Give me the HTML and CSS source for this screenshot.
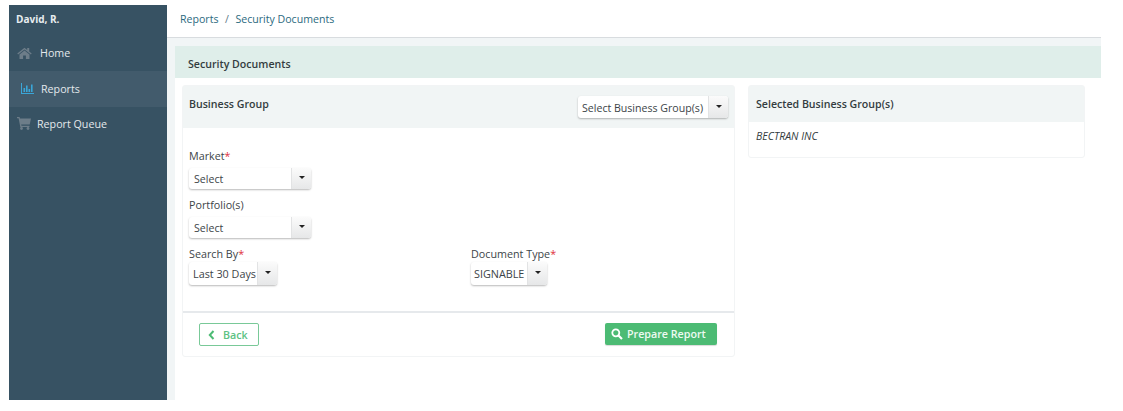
FILE: index.html
```html
<!DOCTYPE html>
<html lang="en">
<head>
<meta charset="utf-8">
<title>Security Documents</title>
<link rel="stylesheet" href="styles.css">
</head>
<body>
<div class="app">
  <aside class="sidebar">
    <div class="user">David, R.</div>
    <a class="nav nav-home"><svg class="ico" width="15" height="12" viewBox="0 0 15 12"><path fill="#6d7d89" d="M7.5 0.8 0.3 6.6l.8 1L7.5 2.5l6.4 5.1.8-1-2.5-2V1h-2v2zM2.5 7.5V12h3.6V8.600h2.800V12h3.600V7.500L7.500 3.500z"/></svg><span>Home</span></a>
    <a class="nav nav-reports"><svg class="ico" width="13" height="11" viewBox="0 0 13 11"><path fill="#3aa6d8" d="M0 0h1v10h12v1H0zM2.500 5h1.600v4H2.500zM5 2.500h1.600V9H5zM7.500 6h1.600v3H7.500zM10 1.500h1.600V9H10z"/></svg><span>Reports</span></a>
    <a class="nav nav-queue"><svg class="ico" width="14" height="13" viewBox="0 0 14 13"><path fill="#6d7d89" d="M0 0h2.500l.5 1.500h11L12.700 7.500H4.200l.3 1.300h8v1.200H3.300L1.600 1.200H0z"/><circle fill="#6d7d89" cx="4.500" cy="11.500" r="1.400"/><circle fill="#6d7d89" cx="11" cy="11.500" r="1.400"/></svg><span>Report Queue</span></a>
  </aside>
  <div class="main">
    <header class="crumbs"><a>Reports</a><span class="sep">/</span><a>Security Documents</a></header>
    <div class="content">
      <h1 class="page-title">Security Documents</h1>
      <div class="columns">
        <section class="card form-card">
          <div class="card-head group-head">
            <h2>Business Group</h2>
            <div class="select select-group"><span class="val">Select Business Group(s)</span><span class="caret-box"><i class="caret"></i></span></div>
          </div>
          <div class="form-body">
            <label class="lbl lbl-market">Market<b>*</b></label>
            <div class="select select-wide"><span class="val">Select</span><span class="caret-box"><i class="caret"></i></span></div>
            <label class="lbl lbl-portfolio">Portfolio(s)</label>
            <div class="select select-wide"><span class="val">Select</span><span class="caret-box"><i class="caret"></i></span></div>
            <div class="split">
              <div class="field">
                <label class="lbl">Search By<b>*</b></label>
                <div class="select select-small select-days"><span class="val">Last 30 Days</span><span class="caret-box"><i class="caret"></i></span></div>
              </div>
              <div class="field">
                <label class="lbl">Document Type<b>*</b></label>
                <div class="select select-small select-doc"><span class="val">SIGNABLE</span><span class="caret-box"><i class="caret"></i></span></div>
              </div>
            </div>
          </div>
          <div class="actions">
            <button class="btn btn-back"><svg width="7" height="10" viewBox="0 0 7 10"><path fill="none" stroke="#4cbb74" stroke-width="2" d="M5.500 1 1.800 5l3.700 4"/></svg>Back</button>
            <button class="btn btn-prepare"><svg width="12" height="12" viewBox="0 0 12 12"><circle cx="4.800" cy="4.800" r="3.500" fill="none" stroke="#fff" stroke-width="1.800"/><path stroke="#fff" stroke-width="2.200" d="M7.500 7.500 11 11"/></svg>Prepare Report</button>
          </div>
        </section>
        <section class="card side-card">
          <div class="card-head side-head"><h2>Selected Business Group(s)</h2></div>
          <div class="side-body"><em>BECTRAN INC</em></div>
        </section>
      </div>
    </div>
  </div>
</div>
</body>
</html>
```

FILE: styles.css
```css
* { box-sizing: border-box; }
html, body { margin: 0; height: 100%; }
body {
  background: #fff;
  font-family: "Open Sans", sans-serif;
  font-size: 11px;
  color: #3c4448;
  padding: 5px 22px 11px 9px;
}
.app { display: flex; height: 395px; }
.sidebar { width: 158px; flex: none; background: #375263; color: #e4e9ec; }
.user { height: 30px; padding: 6px 0 0 7px; font-weight: 700; font-size: 10px; line-height: 16px; color: #e8edf0; }
.nav { display: flex; align-items: center; height: 36px; font-size: 10.700px; }
.nav-home { padding: 0 0 1px 8px; gap: 8px; }
.nav-reports { padding: 0 0 1px 12px; gap: 7px; background: #425b6c; }
.nav-queue { padding: 0 0 1px 8px; gap: 6px; height: 34px; }
.main { flex: 1; display: flex; flex-direction: column; min-width: 0; }
.crumbs { height: 33px; padding: 0 0 5px 13px; display: flex; align-items: center; border-bottom: 1px solid #d8dcdf; color: #2c6a80; font-size: 10.600px; }
.sep { margin: 0 6.500px; color: #5f7a88; }
.content { flex: 1; background: #fff; border-left: 8px solid #f1f5f6; border-top: 8px solid #f1f5f6; }
.page-title { margin: 0; height: 32px; background: #dfeeea; font-size: 10.600px; font-weight: 600; line-height: 37px; padding-left: 13px; color: #333c40; }
.columns { display: flex; align-items: flex-start; padding: 7px 0 0 7px; gap: 13px; }
.card { background: #fff; border: 1px solid #f2f4f5; border-radius: 3px; }
.card h2 { margin: 0; font-size: 10.600px; font-weight: 600; color: #333c40; }
.card-head { background: #f1f5f5; }
.form-card { width: 553px; height: 272px; display: flex; flex-direction: column; }
.group-head { height: 42px; display: flex; justify-content: space-between; padding: 10px 6px 0 6px; }
.group-head h2 { line-height: 16px; }
.form-body { flex: 1; padding: 20px 6px 0 6px; }
.lbl { display: block; font-size: 10.750px; line-height: 16px; color: #3c4448; }
.lbl b { color: #e0313c; font-weight: 400; }
.lbl-market { margin-bottom: 4px; }
.lbl-portfolio { margin: 8px 0 4px; }
.select { display: flex; background: #fff; border-radius: 3px; box-shadow: 0 1px 2px rgba(0,0,0,.28); font-size: 10.600px; color: #3c4448; }
.val { flex: 1; white-space: nowrap; overflow: hidden; line-height: 22px; }
.caret-box { flex: none; width: 20px; display: flex; align-items: center; justify-content: center; padding-bottom: 2px; background: linear-gradient(#fbfbfb, #e6e7e8); border-left: 1px solid #e2e3e4; border-radius: 0 3px 3px 0; }
.caret { width: 0; height: 0; border: 3.500px solid transparent; border-top: 3.500px solid #222; border-bottom: 0; }
.select-group { width: 150px; height: 22px; flex: none; }
.select-group .val { padding-left: 4px; line-height: 24px; }
.select-wide { width: 122px; height: 21px; }
.select-wide .val { padding-left: 5px; line-height: 23px; }
.split { display: flex; margin-top: 8px; }
.field { width: 282px; flex: none; }
.select-small { height: 23px; font-size: 10.800px; }
.select-small .val { padding-left: 3px; line-height: 23px; }
.select-days .val { padding-left: 4px; }
.select-days { width: 88px; }
.select-doc { width: 76px; }
.actions { height: 45px; border-top: 2px solid #e6e9ec; display: flex; justify-content: space-between; align-items: flex-start; padding: 10px 17px 0 16px; }
.btn { display: flex; align-items: center; font-family: inherit; font-size: 10.700px; font-weight: 600; border-radius: 2px; padding: 0; }
.btn-back { width: 60px; height: 23px; background: #fff; color: #5cc283; border: 1px solid #79c998; padding-left: 8px; gap: 8px; }
.btn-prepare { width: 112px; height: 22px; background: #4cbb74; color: #eefaf2; border: 0; padding: 0 0 1px 6px; gap: 4px; box-shadow: 0 1px 1px rgba(0,0,0,.15); }
.side-card { width: 337px; height: 73px; }
.side-head { height: 36px; padding: 0 7px 1px; display: flex; align-items: center; }
.side-body { padding: 6px 7px; font-size: 10.500px; line-height: 16px; color: #333c40; }
```
